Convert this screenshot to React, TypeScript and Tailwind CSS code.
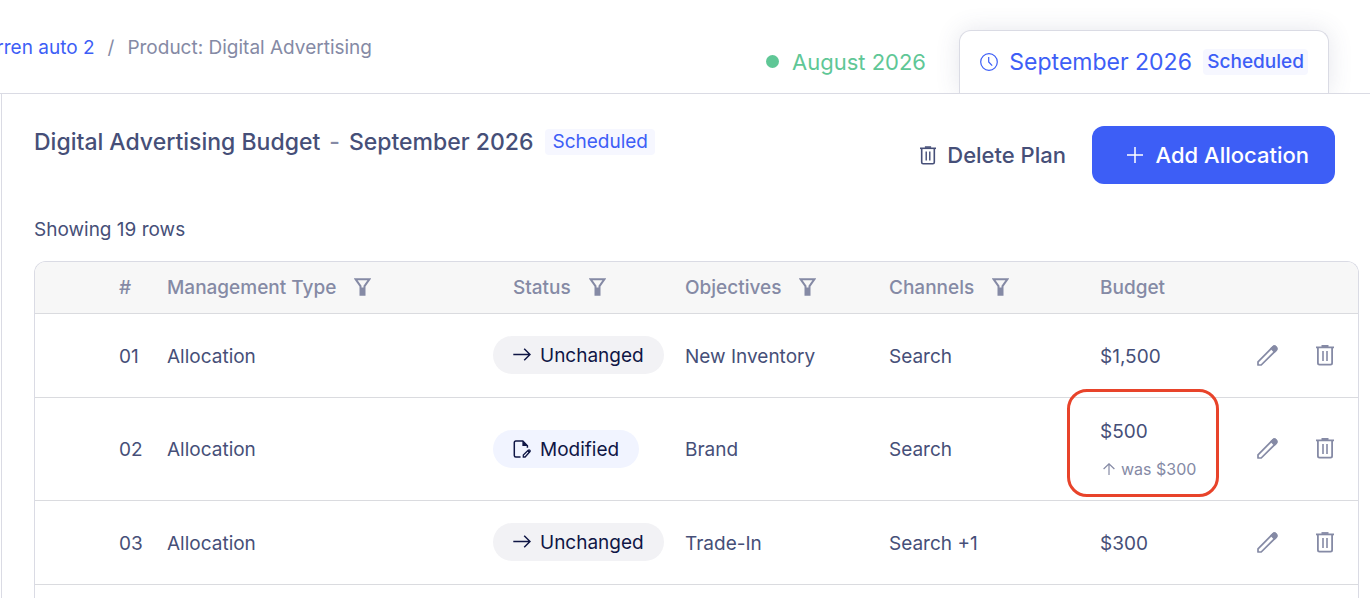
import type { ReactNode } from 'react'

type Status = 'Unchanged' | 'Modified'

type Row = {
  id: string
  type: string
  status: Status
  objective: string
  channel: string
  budget: string
  previous?: string
}

const rows: Row[] = [
  { id: '01', type: 'Allocation', status: 'Unchanged', objective: 'New Inventory', channel: 'Search', budget: '$1,500' },
  { id: '02', type: 'Allocation', status: 'Modified', objective: 'Brand', channel: 'Search', budget: '$500', previous: '$300' },
  { id: '03', type: 'Allocation', status: 'Unchanged', objective: 'Trade-In', channel: 'Search +1', budget: '$300' },
]

function TrashIcon({ className }: { className: string }) {
  return (
    <svg className={className} viewBox="0 0 18 21" fill="none" stroke="currentColor" aria-hidden="true">
      <path d="M0 2.4h18" strokeWidth="1.8" />
      <path d="M5.5 1h7" strokeWidth="1.8" />
      <path d="M1.9 2.5v15.6c0 .9.7 1.6 1.6 1.6h11c.9 0 1.600-.7 1.600-1.600V2.500" strokeWidth="1.8" />
      <path d="M7 6v10M11 6v10" strokeWidth="1.6" />
    </svg>
  )
}

function PencilIcon() {
  return (
    <svg className="w-[21px] h-[21px]" viewBox="0 0 21 21" fill="none" stroke="currentColor" strokeWidth="1.7" strokeLinejoin="round" aria-hidden="true">
      <path d="M1 20v-3.200L15.700 2c1-1 2.300-1 3.300 0s1 2.300 0 3.300L4.200 20z" />
      <path d="M14.200 3.500 15.700 2c1-1 2.300-1 3.300 0s1 2.300 0 3.300l-1.500 1.500z" fill="currentColor" />
    </svg>
  )
}

function FilterIcon() {
  return (
    <svg className="w-[17px] h-[18px]" viewBox="0 0 17 18" fill="none" stroke="currentColor" strokeWidth="2" aria-hidden="true">
      <path d="M1.500 1.200h14l-5 6.900v8.700h-4V8.100z" />
      <path d="M8.500 9.500V17" strokeWidth="3" />
    </svg>
  )
}

function ArrowRightIcon() {
  return (
    <svg className="w-[18px] h-[18px]" viewBox="0 0 18 18" fill="none" stroke="currentColor" strokeWidth="1.5" aria-hidden="true">
      <path d="M.3 8.500h16.400M11.200 2.700 17 8.500l-5.800 5.800" />
    </svg>
  )
}

function FileEditIcon() {
  return (
    <svg className="w-[18px] h-[18px]" viewBox="0 0 18 18" fill="none" stroke="currentColor" strokeWidth="1.5" aria-hidden="true">
      <path d="M7.500 17H2.800c-.9 0-1.500-.6-1.500-1.500v-13C1.300 1.600 1.900 1 2.800 1h7l4.600 4.700v2" />
      <path d="M9.400 1v5.100h5.400z" fill="currentColor" stroke="none" />
      <path d="M10.300 17v-1.900l4.900-4.800c.5-.5 1.200-.5 1.600-.1s.4 1.100 0 1.600L12.100 17z" strokeWidth="1.3" />
      <path d="m14.300 11.200 1.200-1.200 1.900 1.800-1.300 1.300z" fill="currentColor" stroke="none" />
    </svg>
  )
}

function StatusPill({ status }: { status: Status }) {
  const modified = status === 'Modified'
  return (
    <span
      className={`inline-flex items-center gap-[9px] h-[38px] px-5 rounded-full text-[#0f1645] ${
        modified ? 'bg-[#f1f4ff]' : 'bg-[#f2f2f5]'
      }`}
    >
      {modified ? <FileEditIcon /> : <ArrowRightIcon />}
      <span className="pt-0.5">{status}</span>
    </span>
  )
}

function HeaderCell({ children, filter }: { children: ReactNode; filter?: string }) {
  return (
    <th scope="col" className="pl-5 font-medium">
      <span className="flex items-center gap-[18px]">
        <span className="pt-0.5">{children}</span>
        {filter && (
          <button type="button" aria-label={filter}>
            <FilterIcon />
          </button>
        )}
      </span>
    </th>
  )
}

export default function App() {
  return (
    <div className="min-h-screen flex flex-col bg-white text-[#464f78] text-[19px] leading-6 whitespace-nowrap overflow-hidden font-['Inter','Liberation_Sans',sans-serif]">
      {/* Breadcrumb and plan tabs */}
      <header className="h-[94px] shrink-0 flex items-stretch justify-between border-b border-[#dadbe4]">
        <nav className="w-[372px] pt-0.5 flex items-center justify-end gap-[13px] overflow-hidden text-[#858aa5]" aria-label="Breadcrumb">
          <a href="#account" className="text-[#3d5ef6]">rren auto 2</a>
          <span>/</span>
          <span>Product: Digital Advertising</span>
        </nav>

        <div className="flex items-end pr-[41px]" role="tablist">
          <button type="button" role="tab" aria-selected="false" className="h-[63px] flex items-center gap-[13px] pr-[33px] text-[22px] text-[#5fc796]">
            <span className="size-[13px] rounded-full bg-[#5fc796]" />
            August 2026
          </button>
          <button
            type="button"
            role="tab"
            aria-selected="true"
            className="w-[370px] h-[63px] flex items-center justify-between px-5 rounded-t-xl border border-b-0 border-[#dadbe4] bg-white text-[23px] text-[#3d5ef6] shadow-[0_0_24px_rgba(70,79,120,0.14)] [clip-path:inset(-30px_-30px_0_-30px)]"
          >
            <svg className="size-[18px]" viewBox="0 0 18 18" fill="none" stroke="currentColor" strokeWidth="1.2" aria-hidden="true">
              <circle cx="9" cy="9" r="8.300" />
              <path d="M8.700 4v5l3.500 3.700" />
            </svg>
            September 2026
            <span className="h-[26px] px-1 rounded bg-[#f6f7ff] text-[19px] leading-[26px] font-medium">Scheduled</span>
          </button>
        </div>
      </header>

      <main className="flex-1 flex flex-col ml-px border-l border-[#dadbe4] pl-8 pr-[11px] pt-8">
        <div className="flex items-start justify-between pr-6">
          <div className="flex items-center gap-3 h-8">
            <h1 className="flex items-center gap-[9px] text-[23px] font-medium">
              Digital Advertising Budget
              <span className="text-[#858aa5]">-</span>
              September 2026
            </h1>
            <span className="h-[26px] px-[7px] rounded bg-[#f6f7ff] leading-[26px] text-[#3d5ef6]">Scheduled</span>
          </div>
          <div className="flex items-center gap-[26px] text-[22px] font-medium">
            <button type="button" className="flex items-center gap-[11px]">
              <TrashIcon className="w-4 h-[19px]" />
              Delete Plan
            </button>
            <button type="button" className="w-[243px] h-[58px] flex items-center justify-end gap-[13px] pr-[26px] rounded-xl bg-[#3d5ef6] text-white">
              <svg className="size-4" viewBox="0 0 16 16" stroke="currentColor" strokeWidth="1.5" aria-hidden="true">
                <path d="M8 0v16M0 8h16" />
              </svg>
              Add Allocation
            </button>
          </div>
        </div>

        <p className="mt-[34px] mb-[19px]">Showing 19 rows</p>

        <div className="flex-1 rounded-t-xl border border-b-0 border-[#dadbe4] overflow-hidden">
          <table className="w-full table-fixed text-left">
            <colgroup>
              <col className="w-16" />
              <col className="w-12" />
              <col />
              <col className="w-[172px]" />
              <col className="w-[204px]" />
              <col className="w-[211px]" />
              <col className="w-[157px]" />
              <col className="w-[59px]" />
              <col className="w-[62px]" />
            </colgroup>
            <thead>
              <tr className="h-[51px] bg-[#f7f7f7] border-b border-[#dadbdf] text-[#858aa5]">
                <td />
                <HeaderCell>#</HeaderCell>
                <HeaderCell filter="Filter by management type">Management Type</HeaderCell>
                <HeaderCell filter="Filter by status">Status</HeaderCell>
                <HeaderCell filter="Filter by objectives">Objectives</HeaderCell>
                <HeaderCell filter="Filter by channels">Channels</HeaderCell>
                <HeaderCell>Budget</HeaderCell>
                <td />
                <td />
              </tr>
            </thead>
            <tbody>
              {rows.map((row) => (
                <tr key={row.id} className={`border-b border-[#dadbdf] ${row.previous ? 'h-[103px]' : 'h-[84px]'}`}>
                  <td />
                  <td className="pl-5 pt-[3px]">{row.id}</td>
                  <td className="pl-5 pt-[3px]">{row.type}</td>
                  <td><StatusPill status={row.status} /></td>
                  <td className="pl-5 pt-[3px]">{row.objective}</td>
                  <td className="pl-5 pt-[3px]">{row.channel}</td>
                  <td className="relative pl-5 pt-[3px]">
                    {row.budget}
                    {row.previous && (
                      <>
                        <span className="flex items-center gap-[6px] mt-[13px] pl-[3px] text-[16px] text-[#858aa5]">
                          <svg className="size-3" viewBox="0 0 12 12" fill="none" stroke="currentColor" strokeWidth="1.2" aria-hidden="true">
                            <path d="M6 12V.8M.6 6 6 .8 11.400 6" />
                          </svg>
                          was {row.previous}
                        </span>
                        {/* Highlight around the changed budget */}
                        <span className="absolute -left-[13px] -top-[9px] w-[152px] h-[108px] rounded-[20px] border-3 border-[#e8432a]" />
                      </>
                    )}
                  </td>
                  <td className="pl-5 text-[#858aa5]">
                    <button type="button" className="block" aria-label={`Edit allocation ${row.id}`}>
                      <PencilIcon />
                    </button>
                  </td>
                  <td className="pl-5 text-[#858aa5]">
                    <button type="button" className="block" aria-label={`Delete allocation ${row.id}`}>
                      <TrashIcon className="w-[18px] h-[21px]" />
                    </button>
                  </td>
                </tr>
              ))}
            </tbody>
          </table>
        </div>
      </main>
    </div>
  )
}
